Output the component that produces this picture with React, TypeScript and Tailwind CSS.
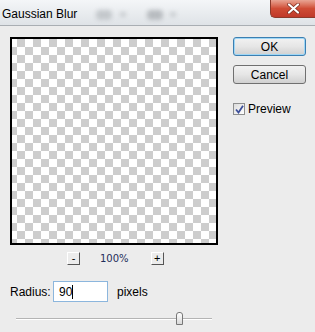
import React from "react";

const App: React.FC = () => {
  return (
    <div className="w-[315px] h-[332px] bg-[#ececec] overflow-hidden font-['Liberation_Sans',sans-serif] text-[12px] text-black">
      {/* Title bar */}
      <div className="relative h-[26px] bg-gradient-to-b from-[#f4f6f8] to-[#dfe3e7] border-b border-[#a9aeb3]">
        <span className="absolute left-[2px] top-[5px] text-[12px]">Gaussian Blur</span>
        {/* blurred toolbar icons */}
        <div className="absolute left-[96px] top-[10px] w-[16px] h-[10px] bg-[#c4c8cc] blur-[2px] rounded-sm" />
        <div className="absolute left-[120px] top-[12px] w-[6px] h-[5px] bg-[#c9cdd1] blur-[2px]" />
        <div className="absolute left-[147px] top-[10px] w-[16px] h-[10px] bg-[#b8bcc0] blur-[2px] rounded-sm" />
        <div className="absolute left-[170px] top-[12px] w-[6px] h-[5px] bg-[#c9cdd1] blur-[2px]" />
        {/* close button */}
        <div className="absolute right-0 top-0 w-[45px] h-[18px] rounded-bl-[5px] border border-t-0 border-r-0 border-[#8c3a2b] bg-gradient-to-b from-[#e8a493] via-[#cf4c35] to-[#c0392a] flex items-center justify-center">
          <svg width="13" height="11" viewBox="0 0 13 11">
            <path d="M2 1.5 L11 9.5 M11 1.5 L2 9.5" stroke="#7a2a1e" strokeWidth="3.6" strokeLinecap="round" />
            <path d="M2 1.5 L11 9.5 M11 1.5 L2 9.5" stroke="#ffffff" strokeWidth="2.2" strokeLinecap="round" />
          </svg>
        </div>
      </div>

      <div className="flex pt-[11px]">
        {/* Left column */}
        <div className="pl-[10px] w-[218px]">
          <div className="w-[208px] h-[208px] border-2 border-black bg-[repeating-conic-gradient(#cdcdcd_0_25%,#ffffff_0_50%)] bg-[length:16px_16px] bg-[position:-3px_0px]" />
          <div className="flex items-center mt-[6px] h-[14px]">
            <div className="ml-[57px] w-[13px] h-[13px] bg-[#ececec] border-r border-b border-[#555] border-t border-l border-t-white border-l-white flex items-center justify-center text-[11px] leading-none">-</div>
            <span className="ml-[20px] text-[10px] font-['DejaVu_Sans',sans-serif] text-[#1f2d5a]">100%</span>
            <div className="ml-[22px] w-[13px] h-[13px] bg-[#ececec] border-r border-b border-[#555] border-t border-l border-t-white border-l-white flex items-center justify-center text-[11px] leading-none">+</div>
          </div>
          <div className="flex items-center mt-[16px]">
            <span className="text-[12px] w-[43px]">Radius:</span>
            <div className="w-[55px] h-[21px] border border-[#8cb6dd] bg-white flex items-center pl-[5px]">
              <span className="text-[12px]">90</span>
              <span className="w-px h-[14px] bg-black" />
            </div>
            <span className="ml-[9px] text-[12px]">pixels</span>
          </div>
          <div className="relative mt-[9px] ml-[6px] w-[196px] h-[16px]">
            <div className="absolute left-0 right-0 top-[7px] h-[2px] bg-[#b4b4b4] border-b border-white" />
            <div className="absolute left-[160px] top-[1px] w-[7px] h-[13px] rounded-t-[3px] border border-[#777] bg-gradient-to-b from-white to-[#d8d8d8]" />
          </div>
        </div>

        {/* Right column */}
        <div className="pl-[15px] flex flex-col">
          <button className="w-[73px] h-[19px] rounded-[3px] border border-[#3c7fb1] shadow-[0_0_0_1px_#9fd7f6_inset] bg-gradient-to-b from-[#f2f2f2] via-[#e6e6e6] to-[#d0d0d0] text-[12px] leading-none">OK</button>
          <button className="mt-[9px] w-[73px] h-[19px] rounded-[3px] border border-[#707070] bg-gradient-to-b from-[#f2f2f2] via-[#e6e6e6] to-[#d0d0d0] text-[12px] leading-none">Cancel</button>
          <div className="flex items-center mt-[16px]">
            <div className="w-[12px] h-[12px] border border-[#8e8f8f] bg-gradient-to-br from-[#dcdcdc] to-white flex items-center justify-center">
              <svg width="9" height="9" viewBox="0 0 9 9">
                <path d="M1 4.5 L3.5 7.5 L8 0.8" stroke="#3c4f9a" strokeWidth="1.8" fill="none" />
              </svg>
            </div>
            <span className="ml-[3px] text-[12px]">Preview</span>
          </div>
        </div>
      </div>
    </div>
  );
};

export default App;
